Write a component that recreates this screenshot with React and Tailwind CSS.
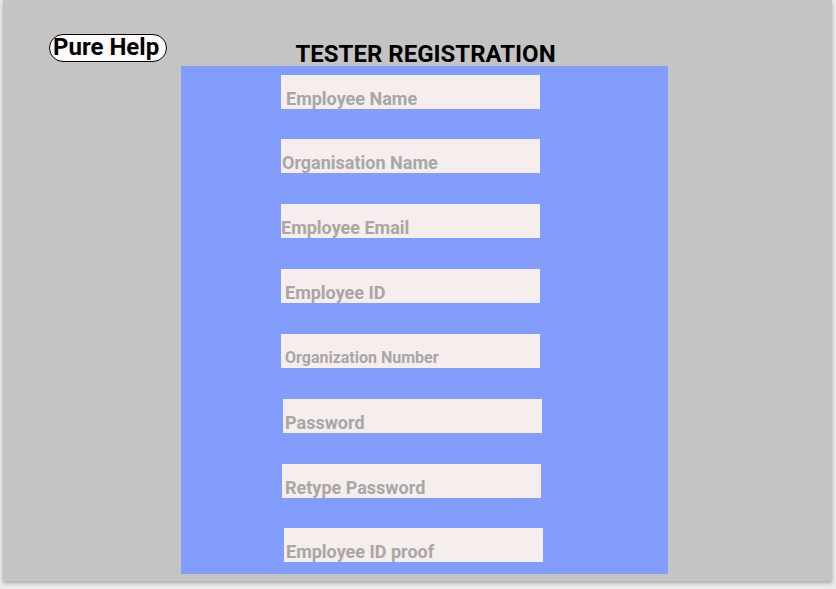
import React from "react";

const fields = [
  { label: "Employee Name", mt: "mt-[9px]", ml: "ml-[100px]", pl: "pl-[5px]", size: "text-[18px]" },
  { label: "Organisation Name", mt: "mt-[30px]", ml: "ml-[100px]", pl: "pl-[1px]", size: "text-[18px]" },
  { label: "Employee Email", mt: "mt-[31px]", ml: "ml-[100px]", pl: "pl-0", size: "text-[18px]" },
  { label: "Employee ID", mt: "mt-[31px]", ml: "ml-[100px]", pl: "pl-[4px]", size: "text-[18px]" },
  { label: "Organization Number", mt: "mt-[31px]", ml: "ml-[100px]", pl: "pl-[4px]", size: "text-[16px]" },
  { label: "Password", mt: "mt-[31px]", ml: "ml-[102px]", pl: "pl-[2px]", size: "text-[18px]" },
  { label: "Retype Password", mt: "mt-[31px]", ml: "ml-[101px]", pl: "pl-[3px]", size: "text-[18px]" },
  { label: "Employee ID proof", mt: "mt-[30px]", ml: "ml-[103px]", pl: "pl-[2px]", size: "text-[18px]" },
];

export default function App() {
  return (
    <div
      className="w-[836px] h-[589px] bg-[#ececec] overflow-hidden"
      style={{ fontFamily: "Roboto, 'Liberation Sans', sans-serif" }}
    >
      <div className="ml-[3px] w-[829px] h-[581px] bg-[#c4c4c4] shadow-[0_2px_4px_rgba(0,0,0,0.3)] flex flex-col">
        <div className="flex h-[66px]">
          <div className="w-[178px] pl-[46px] pt-[34px]">
            <div className="h-[28px] w-[118px] border border-black rounded-full bg-[#fdfafa] pl-[3px] text-[24px] leading-[24px] font-bold text-black whitespace-nowrap">
              Pure Help
            </div>
          </div>
          <div className="w-[487px] pt-[40px] pl-[2px] text-center text-[24px] leading-[28px] font-bold text-black whitespace-nowrap">
            TESTER REGISTRATION
          </div>
        </div>
        <div className="ml-[178px] w-[487px] h-[508px] bg-[#839dfd] flex flex-col">
          {fields.map((f) => (
            <div
              key={f.label}
              className={`${f.mt} ${f.ml} ${f.pl} ${f.size} w-[259px] h-[34px] bg-[#f5eeec] flex items-end leading-[20px] font-bold text-[#aaa6a6] whitespace-nowrap`}
            >
              {f.label}
            </div>
          ))}
        </div>
      </div>
    </div>
  );
}
